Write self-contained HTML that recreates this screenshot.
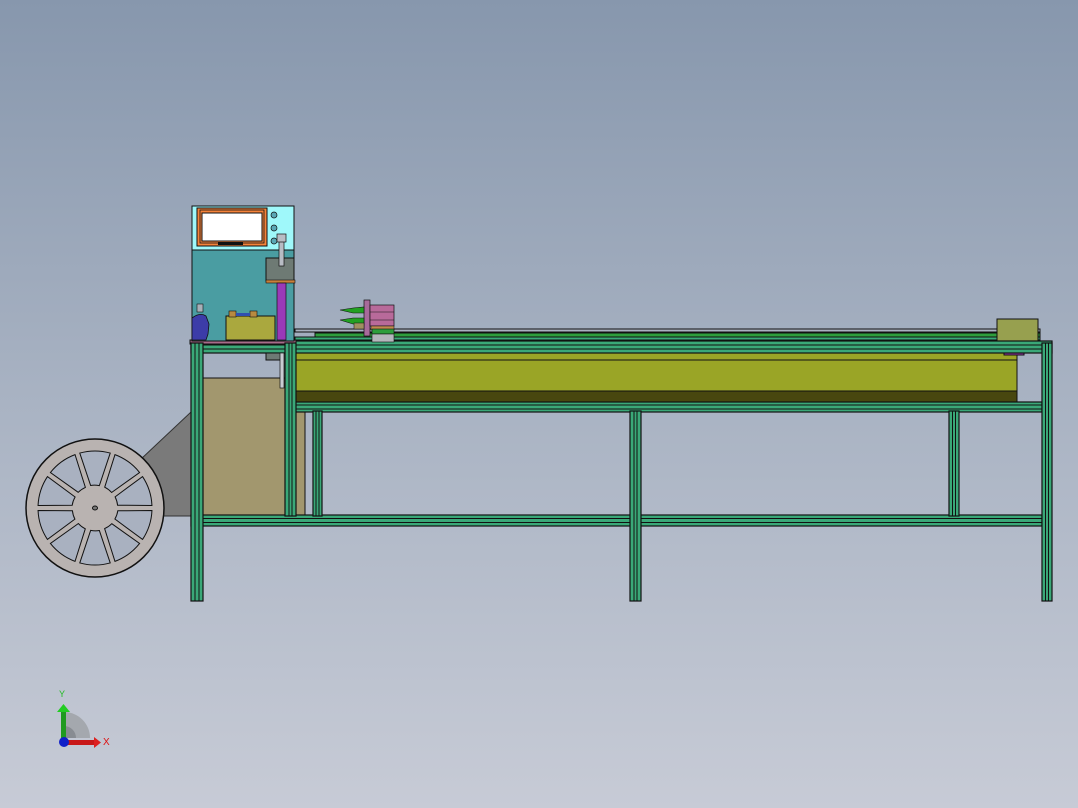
<!DOCTYPE html>
<html><head><meta charset="utf-8"><style>
html,body{margin:0;padding:0;width:1078px;height:808px;overflow:hidden}
body{background:linear-gradient(#8797ad 0%,#a9b3c3 50%,#c7cbd6 100%)}
svg{position:absolute;left:0;top:0}
</style></head><body>
<svg width="1078" height="808" viewBox="0 0 1078 808" xmlns="http://www.w3.org/2000/svg">
<!-- gray triangle -->
<polygon points="191,412 191,516 150,516 110,497 140,460" fill="#7a7a7a" stroke="#333" stroke-width="1"/>
<!-- wheel -->
<g transform="translate(95,508)">
<circle r="69" fill="#b9b3b1" stroke="#111" stroke-width="1.5"/>
<g fill="#a9b1c0" stroke="#111" stroke-width="1">
<path id="sp" d="M22.8,2.8 L56.95,2.49 A57,57 0 0 1 47.53,31.46 L19.9,11 A23,23 0 0 0 22.8,2.8 Z"/>
<use href="#sp" transform="rotate(36)"/><use href="#sp" transform="rotate(72)"/><use href="#sp" transform="rotate(108)"/><use href="#sp" transform="rotate(144)"/><use href="#sp" transform="rotate(180)"/><use href="#sp" transform="rotate(216)"/><use href="#sp" transform="rotate(252)"/><use href="#sp" transform="rotate(288)"/><use href="#sp" transform="rotate(324)"/>
</g>
<ellipse rx="2.5" ry="2" fill="#777" stroke="#111"/>
</g>
<!-- tan box -->
<rect x="203" y="378" width="83" height="138" fill="#a2976e" stroke="#111"/>
<rect x="295" y="411" width="10" height="105" fill="#a2976e" stroke="#111"/>
<!-- yellow beam -->
<rect x="295" y="347" width="722" height="56" fill="#9aa526" stroke="#111"/>
<line x1="295" y1="360" x2="1017" y2="360" stroke="#111"/>
<rect x="295" y="391" width="722" height="12" fill="#48470f" stroke="#111"/>
<!-- top rails -->
<rect x="295" y="329" width="745" height="3" fill="#a9b1c0" stroke="#111"/>
<rect x="315" y="333" width="725" height="4" fill="#2d9e3c" stroke="#111"/>
<rect x="295" y="337" width="745" height="6" fill="#3aa878" stroke="#111"/>
<line x1="295" y1="340" x2="1040" y2="340" stroke="#111"/>
<!-- right box -->
<rect x="997" y="319" width="41" height="24" fill="#97a04f" stroke="#111"/>
<rect x="1007" y="343" width="12" height="3" fill="#c08a50"/>
<rect x="1004" y="348" width="20" height="7" fill="#a03ab0" stroke="#111"/>
<!-- frame horizontals -->
<g fill="#3aa878" stroke="#111" stroke-width="1.2">
<rect x="191" y="341" width="861" height="12"/>
<rect x="295" y="402" width="747" height="10"/>
<rect x="191" y="515" width="851" height="11"/>
</g>
<g stroke="#111" stroke-width="1">
<line x1="191" y1="345" x2="1052" y2="345"/><line x1="191" y1="349" x2="1052" y2="349"/>
<line x1="295" y1="405" x2="1042" y2="405"/><line x1="295" y1="409" x2="1042" y2="409"/>
<line x1="191" y1="518.5" x2="1042" y2="518.5"/><line x1="191" y1="522.5" x2="1042" y2="522.5"/>
</g>
<rect x="190" y="340" width="106" height="4" fill="#a86a8a" stroke="#111"/>
<!-- posts -->
<g fill="#3aa878" stroke="#111" stroke-width="1.2">
<rect x="191" y="343" width="12" height="258"/>
<rect x="285" y="343" width="11" height="173"/>
<rect x="313" y="411" width="9" height="105"/>
<rect x="630" y="411" width="11" height="190"/>
<rect x="949" y="411" width="10" height="105"/>
<rect x="1042" y="343" width="10" height="258"/>
</g>
<g stroke="#111" stroke-width="1">
<line x1="195" y1="343" x2="195" y2="601"/><line x1="199" y1="343" x2="199" y2="601"/>
<line x1="289" y1="343" x2="289" y2="516"/><line x1="292" y1="343" x2="292" y2="516"/>
<line x1="316" y1="411" x2="316" y2="516"/><line x1="319" y1="411" x2="319" y2="516"/>
<line x1="634" y1="411" x2="634" y2="601"/><line x1="637" y1="411" x2="637" y2="601"/>
<line x1="952.5" y1="411" x2="952.5" y2="516"/><line x1="955.5" y1="411" x2="955.5" y2="516"/>
<line x1="1045.5" y1="343" x2="1045.5" y2="601"/><line x1="1048.5" y1="343" x2="1048.5" y2="601"/>
</g>
<!-- cabinet -->
<rect x="192" y="206" width="102" height="135" fill="#4a9da2" stroke="#111"/>
<rect x="192" y="206" width="102" height="44" fill="#9ff8fa" stroke="#111"/>
<rect x="197" y="208" width="70" height="38" fill="#f5833a" stroke="#111"/>
<rect x="202" y="213" width="60" height="28" fill="#fff" stroke="#111"/>
<rect x="200" y="210" width="64" height="33" fill="none" stroke="#111" stroke-width="0.8"/>
<rect x="218" y="242" width="25" height="3" fill="#111"/>
<circle cx="274" cy="215" r="3" fill="#5aa7b5" stroke="#111" stroke-width=".7"/>
<circle cx="274" cy="228" r="3" fill="#5aa7b5" stroke="#111" stroke-width=".7"/>
<circle cx="274" cy="241" r="3" fill="#5aa7b5" stroke="#111" stroke-width=".7"/>
<!-- cylinder -->
<rect x="266" y="258" width="28" height="23" fill="#6e7a74" stroke="#111"/>
<rect x="266" y="280" width="29" height="3" fill="#c9803a" stroke="#111" stroke-width=".6"/>
<rect x="277" y="283" width="9" height="57" fill="#9a3ab8" stroke="#111" stroke-width=".7"/>
<rect x="279" y="236" width="5" height="30" fill="#b8bcc4" stroke="#111" stroke-width=".7"/>
<rect x="277" y="234" width="9" height="8" fill="#b8bcc4" stroke="#111" stroke-width=".7"/>
<rect x="266" y="353" width="16" height="7" fill="#6e7a74" stroke="#111"/>
<rect x="280" y="353" width="4" height="35" fill="#c9ccd2" stroke="#111" stroke-width=".7"/>
<!-- small yellow box & blue valve -->
<rect x="226" y="316" width="49" height="24" fill="#aaa83e" stroke="#111"/>
<rect x="229" y="311" width="7" height="6" fill="#b88a40" stroke="#111" stroke-width=".6"/>
<rect x="250" y="311" width="7" height="6" fill="#b88a40" stroke="#111" stroke-width=".6"/>
<rect x="236" y="313" width="14" height="3" fill="#3050b0"/>
<path d="M192,318 Q200,312 206,316 L209,324 L208,334 L206,340 L192,340 Z" fill="#3c3ca8" stroke="#111" stroke-width=".8"/>
<rect x="197" y="304" width="6" height="8" fill="#a8b0b8" stroke="#111" stroke-width=".6"/>
<!-- gripper -->
<rect x="364" y="300" width="6" height="36" fill="#a86a9a" stroke="#111" stroke-width=".7"/>
<rect x="370" y="305" width="24" height="21" fill="#b86a9a" stroke="#111" stroke-width=".7"/>
<line x1="370" y1="312" x2="394" y2="312" stroke="#111" stroke-width=".6"/><line x1="370" y1="320" x2="394" y2="320" stroke="#111" stroke-width=".6"/>
<rect x="371" y="326" width="23" height="4" fill="#c08a50" stroke="#111" stroke-width=".5"/>
<rect x="372" y="329" width="22" height="5" fill="#2d9e3c" stroke="#111" stroke-width=".6"/>
<rect x="372" y="334" width="22" height="8" fill="#b4b6bc" stroke="#111" stroke-width=".6"/>
<polygon points="340,310 353,308 364,307 364,313 353,313" fill="#22a022" stroke="#111" stroke-width=".6"/>
<polygon points="340,320 353,318 364,318 364,325 353,324" fill="#22a022" stroke="#111" stroke-width=".6"/>
<rect x="354" y="323" width="10" height="6" fill="#a09060" stroke="#111" stroke-width=".5"/>
<!-- axis triad -->
<path d="M64,712 A26,26 0 0 1 90,738 L64,738 Z" fill="#a4a8ae"/>
<path d="M64,726 A12,12 0 0 1 76,738 L64,738 Z" fill="#888c92"/>
<rect x="61" y="711" width="5" height="27" fill="#1f9a1f"/>
<polygon points="57,712 63.5,704 70,712" fill="#22cc22"/>
<rect x="64" y="740" width="30" height="5" fill="#c81818"/>
<polygon points="94,737 101,742.5 94,748" fill="#dd2020"/>
<circle cx="64" cy="742" r="5" fill="#1020c8"/>
<text x="59" y="697" font-family="Liberation Sans,sans-serif" font-size="9" fill="#22bb22">Y</text>
<text x="103" y="745" font-family="Liberation Sans,sans-serif" font-size="10" fill="#dd1111">X</text>
</svg>
</body></html>
